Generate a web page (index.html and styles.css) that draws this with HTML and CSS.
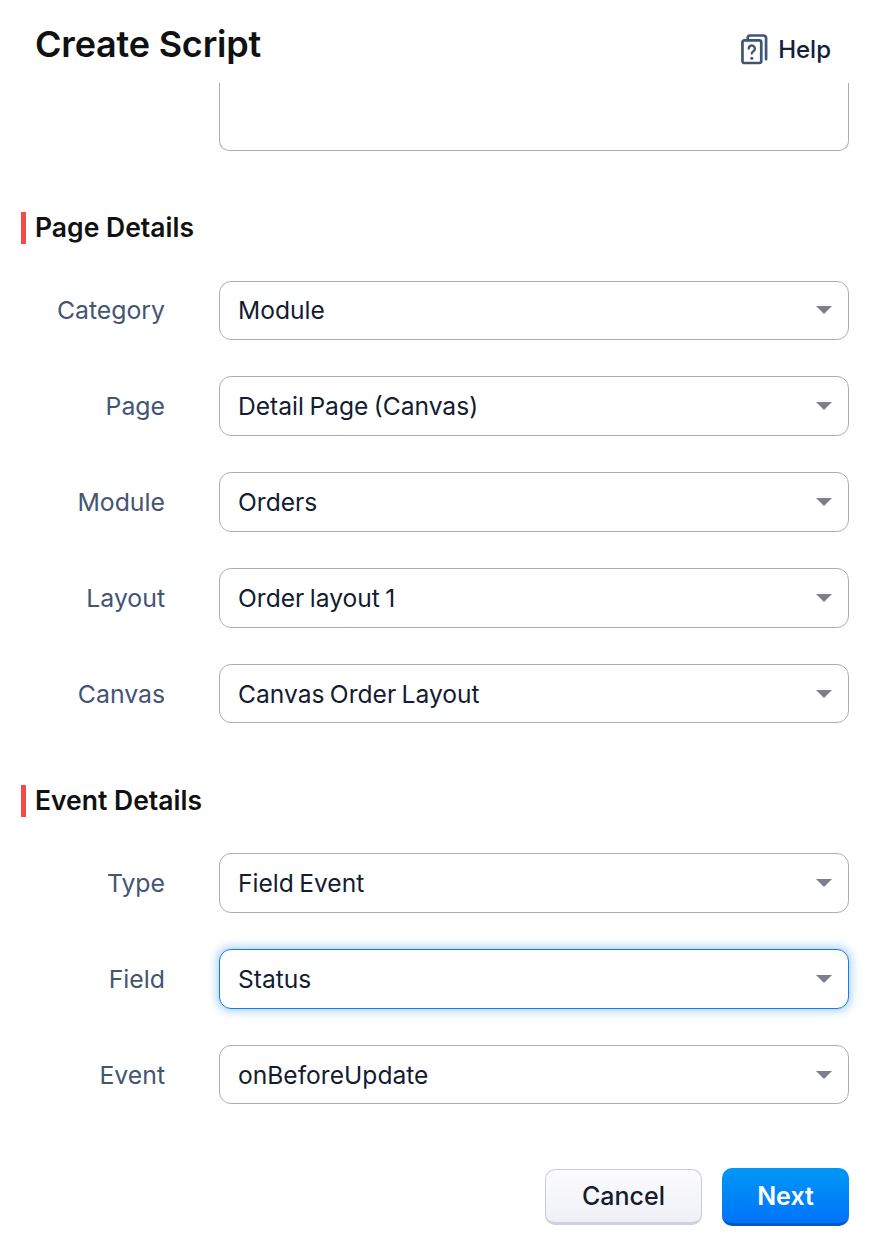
FILE: index.html
```
<!DOCTYPE html>
<html lang="en">
<head>
<meta charset="utf-8">
<title>Create Script</title>
<link rel="stylesheet" href="styles.css">
</head>
<body>
<div class="page">
  <header class="top">
    <h1 class="title">Create Script</h1>
    <a class="help">
      <svg class="help-icon" viewBox="0 0 28 32" fill="none" stroke="#3f5577" stroke-width="2.8" stroke-linejoin="round" stroke-linecap="round">
        <path d="M7 6.5V3.5A2 2 0 0 1 9 1.5H23.5A2.5 2.5 0 0 1 26 4V26"/>
        <rect x="1.5" y="6.5" width="19.5" height="23.5" rx="2"/>
        <path d="M8 15a3.2 3.2 0 1 1 4.8 2.8c-1.2.7-1.6 1.3-1.6 2.4" stroke-width="2.4"/>
        <circle cx="11.2" cy="25" r="1.6" fill="#3f5577" stroke="none"/>
      </svg>
      <span>Help</span>
    </a>
  </header>
  <div class="textarea"></div>

  <h2 class="section first"><span>Page Details</span></h2>
  <div class="rows">
    <div class="row"><label>Category</label><div class="select">Module</div></div>
    <div class="row"><label>Page</label><div class="select">Detail Page (Canvas)</div></div>
    <div class="row"><label>Module</label><div class="select">Orders</div></div>
    <div class="row"><label>Layout</label><div class="select">Order layout 1</div></div>
    <div class="row"><label>Canvas</label><div class="select">Canvas Order Layout</div></div>
  </div>

  <h2 class="section second"><span>Event Details</span></h2>
  <div class="rows">
    <div class="row"><label>Type</label><div class="select">Field Event</div></div>
    <div class="row"><label>Field</label><div class="select focus">Status</div></div>
    <div class="row"><label>Event</label><div class="select">onBeforeUpdate</div></div>
  </div>

  <footer class="actions">
    <button class="btn cancel">Cancel</button>
    <button class="btn next">Next</button>
  </footer>
</div>
</body>
</html>
```

FILE: styles.css
```
* { box-sizing: border-box; }
html, body { margin: 0; padding: 0; background: #fff; }
body { font-family: Inter, "Noto Sans", sans-serif; color: #111827; }
.page { width: 882px; height: 1252px; overflow: hidden; }
.top { height: 83px; display: flex; align-items: flex-start; justify-content: space-between; padding: 0 51px 0 35px; }
.title { margin: 23px 0 0; font-size: 36px; line-height: 42px; font-weight: 600; color: #111; letter-spacing: -0.2px; }
.help { margin-top: 34px; display: flex; align-items: center; gap: 10px; font-size: 24px; line-height: 30px; font-weight: 500; color: #14213a; }
.help-icon { width: 27px; height: 31px; display: block; }
.textarea { margin-left: 219px; width: 630px; height: 68px; border: 1px solid #a7aeba; border-top: 0; border-radius: 0 0 10px 10px; }
.section { margin: 61px 0 0 21px; height: 32px; border-left: 5px solid #f44a4a; padding-left: 9px; font-size: 26.5px; line-height: 31px; font-weight: 600; color: #111; }
.section.second { margin-top: 61.6px; }
.rows { margin-top: 36.6px; display: flex; flex-direction: column; gap: 36.2px; }
.section.second + .rows { margin-top: 36.4px; }
.row { display: flex; align-items: center; height: 59.6px; }
.row label { width: 165px; text-align: right; font-size: 24.8px; color: #435573; }
.select { position: relative; margin-left: 54px; width: 630px; height: 100%; display: flex; align-items: center; padding-left: 18px; border: 1px solid #a7aeba; border-radius: 12px; background: #fff; font-size: 24.6px; word-spacing: -1.5px; color: #131c30; }
.select::after { content: ""; position: absolute; right: 16px; top: 50%; margin-top: -4px; border-style: solid; border-width: 8.5px 8.5px 0; border-color: #7b808c transparent transparent; }
.select.focus { border-color: #0b7ff0; box-shadow: 0 0 10px 2px rgba(30, 130, 245, .38); }
.actions { margin-top: 63.4px; display: flex; justify-content: flex-end; align-items: center; gap: 20px; padding-right: 33px; }
.btn { font-family: inherit; font-size: 25px; font-weight: 500; border-radius: 10px; padding: 0; }
.cancel { width: 157px; height: 56px; color: #131c30; border: 1px solid #c8ccd8; border-bottom: 3px solid #cdd0de; background: linear-gradient(#fcfcfe, #eff0f6); }
.next { width: 127px; height: 58px; padding-top: 2px; color: #fff; font-weight: 600; border: 0; border-bottom: 3px solid #0658c9; background: linear-gradient(#0098f5, #0073fb); }
```
